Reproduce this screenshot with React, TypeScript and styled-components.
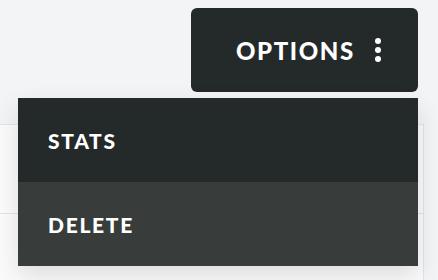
import { useState } from 'react';
import styled, { createGlobalStyle } from 'styled-components';

const colors = {
    page: '#f3f4f6',
    card: '#fbfbfb',
    line: '#e3e4e7',
    dark: '#242a2a',
    hover: '#383d3c',
    text: '#ffffff',
};

const GlobalStyle = createGlobalStyle`
    body {
        margin: 0;
        background: ${colors.page};
        font-family: Lato, "Open Sans", sans-serif;
    }
`;

const menuValues = ['STATS', 'DELETE'];

export default function App() {
    const [hovered] = useState('DELETE');

    return (
        <>
            <GlobalStyle />
            <Page>
                <Header>
                    <Dropdown>
                        <OptionsButton>
                            OPTIONS
                            <Dots viewBox="0 0 6 24" aria-hidden>
                                <circle cx="3" cy="3" r="3" />
                                <circle cx="3" cy="12" r="3" />
                                <circle cx="3" cy="21" r="3" />
                            </Dots>
                        </OptionsButton>
                        <Menu>
                            {menuValues.map((i) => (
                                <MenuItem key={i} isActive={i === hovered}>
                                    {i}
                                </MenuItem>
                            ))}
                        </Menu>
                    </Dropdown>
                </Header>
                <Card>
                    <Row />
                    <Row />
                </Card>
            </Page>
        </>
    );
}

const Page = styled.div`
    width: 438px;
    height: 280px;
    overflow: hidden;
`;

const Header = styled.div`
    display: flex;
    justify-content: flex-end;
    padding: 8px 20px 0 0;
    position: relative;
    z-index: 2;
`;

const Dropdown = styled.div`
    position: relative;
`;

const OptionsButton = styled.button`
    display: flex;
    align-items: center;
    gap: 20px;
    width: 227px;
    height: 84px;
    padding: 0 0 0 45px;
    border: none;
    border-radius: 6px;
    background: ${colors.dark};
    color: ${colors.text};
    font-family: Lato, "Open Sans", sans-serif;
    font-weight: 900;
    font-size: 24px;
    letter-spacing: 1.6px;
    cursor: pointer;
`;

const Dots = styled.svg`
    width: 6px;
    height: 24px;
    fill: ${colors.text};
    flex-shrink: 0;
`;

const Menu = styled.ul`
    position: absolute;
    top: calc(100% + 6px);
    right: 0;
    width: 400px;
    margin: 0;
    padding: 0;
    list-style: none;
    background: ${colors.dark};
    box-shadow: 0 10px 24px rgba(0, 0, 0, 0.12);
`;

const MenuItem = styled.li<{ isActive: boolean }>`
    display: flex;
    align-items: center;
    height: 84px;
    padding-left: 30px;
    background: ${({ isActive }) => (isActive ? colors.hover : colors.dark)};
    color: ${colors.text};
    font-weight: 900;
    font-size: 21px;
    letter-spacing: 1.7px;
    cursor: pointer;
`;

const Card = styled.div`
    margin: 32px 14px 0 0;
    background: ${colors.card};
    border-top: 1px solid ${colors.line};
    border-right: 1px solid ${colors.line};
`;

const Row = styled.div`
    height: 88px;
    border-bottom: 1px solid ${colors.line};
`;
